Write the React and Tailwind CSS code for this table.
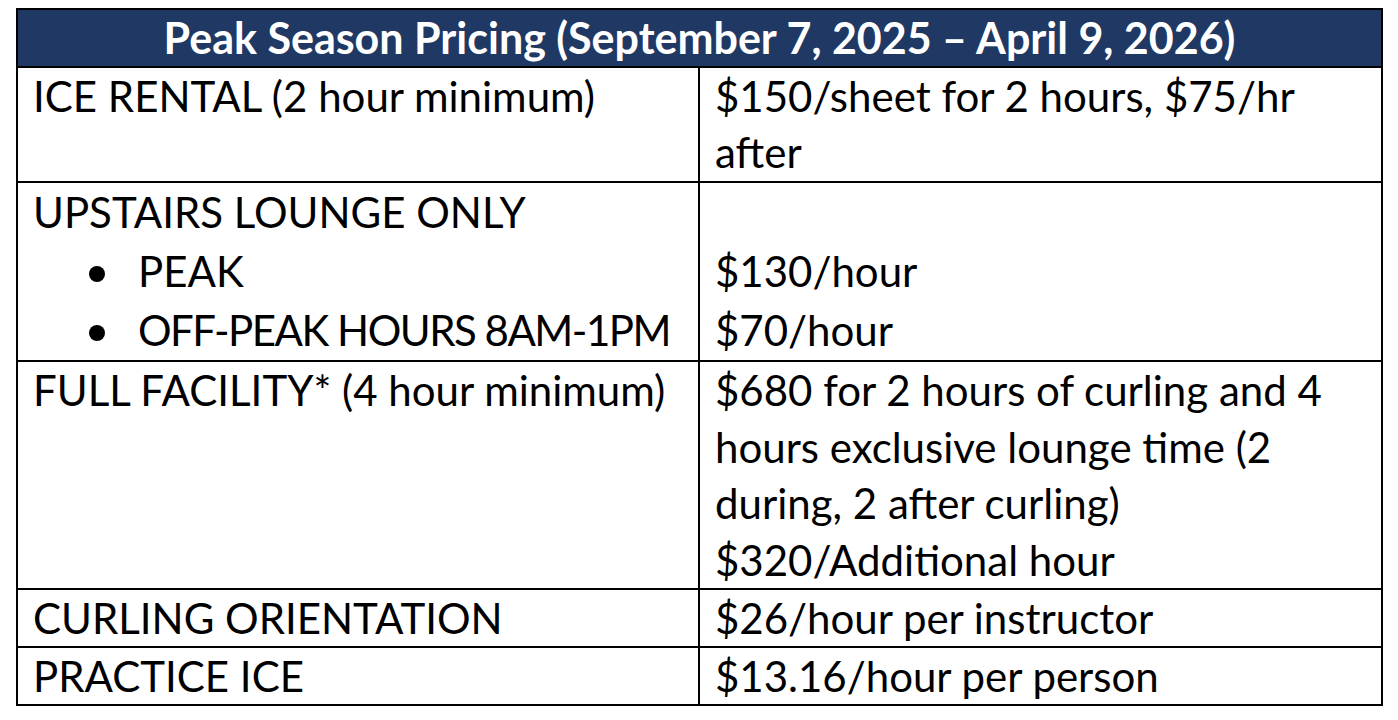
const rows = [
  {
    label: ['ICE RENTAL (2 hour minimum)'],
    price: ['$150/sheet for 2 hours, $75/hr', 'after'],
    height: 'h-[115px]',
  },
];

const Bullet = ({ children, tight }) => (
  <div className="flex items-center whitespace-nowrap">
    <span className="ml-[56px] mr-[33px] mt-[4px] inline-block h-[16px] w-[16px] shrink-0 rounded-full bg-black" />
    <span className={tight ? 'tracking-[-1.5px]' : ''}>{children}</span>
  </div>
);

export default function App() {
  const cell = 'border-2 border-black align-top pl-[15px] pr-[8px] text-[42px] leading-[56px] text-black';

  return (
    <div
      className="w-[1398px] h-[720px] bg-white pt-[8px] pl-[16px]"
      style={{ fontFamily: 'Lato, "Open Sans", sans-serif' }}
    >
      <table className="w-[1365px] border-collapse table-fixed">
        <colgroup>
          <col className="w-[682px]" />
          <col className="w-[683px]" />
        </colgroup>
        <thead>
          <tr>
            <th
              colSpan={2}
              className="border-2 border-black bg-[#1f3864] h-[58px] text-center text-white font-bold text-[43px] leading-[54px]"
            >
              Peak Season Pricing (September 7, 2025 – April 9, 2026)
            </th>
          </tr>
        </thead>
        <tbody>
          {rows.map((r, i) => (
            <tr key={i} className={r.height}>
              <td className={cell}>
                {r.label.map((l) => (
                  <div key={l}>{l}</div>
                ))}
              </td>
              <td className={cell}>
                {r.price.map((l) => (
                  <div key={l}>{l}</div>
                ))}
              </td>
            </tr>
          ))}

          {/* Upstairs lounge */}
          <tr className="h-[177px]">
            <td className={`${cell} !leading-[59px]`}>
              <div>UPSTAIRS LOUNGE ONLY</div>
              <Bullet>PEAK</Bullet>
              <Bullet tight>OFF-PEAK HOURS 8AM-1PM</Bullet>
            </td>
            <td className={`${cell} !leading-[59px]`}>
              <div>&nbsp;</div>
              <div>$130/hour</div>
              <div>$70/hour</div>
            </td>
          </tr>

          {/* Full facility */}
          <tr className="h-[228px]">
            <td className={cell}>
              <div>FULL FACILITY* (4 hour minimum)</div>
            </td>
            <td className={`${cell} !leading-[56.5px]`}>
              <div>$680 for 2 hours of curling and 4 hours exclusive lounge time (2 during, 2 after curling)</div>
              <div>$320/Additional hour</div>
            </td>
          </tr>

          <tr className="h-[58px]">
            <td className={cell}>CURLING ORIENTATION</td>
            <td className={cell}>$26/hour per instructor</td>
          </tr>
          <tr className="h-[57px]">
            <td className={cell}>PRACTICE ICE</td>
            <td className={cell}>$13.16/hour per person</td>
          </tr>
        </tbody>
      </table>
    </div>
  );
}
